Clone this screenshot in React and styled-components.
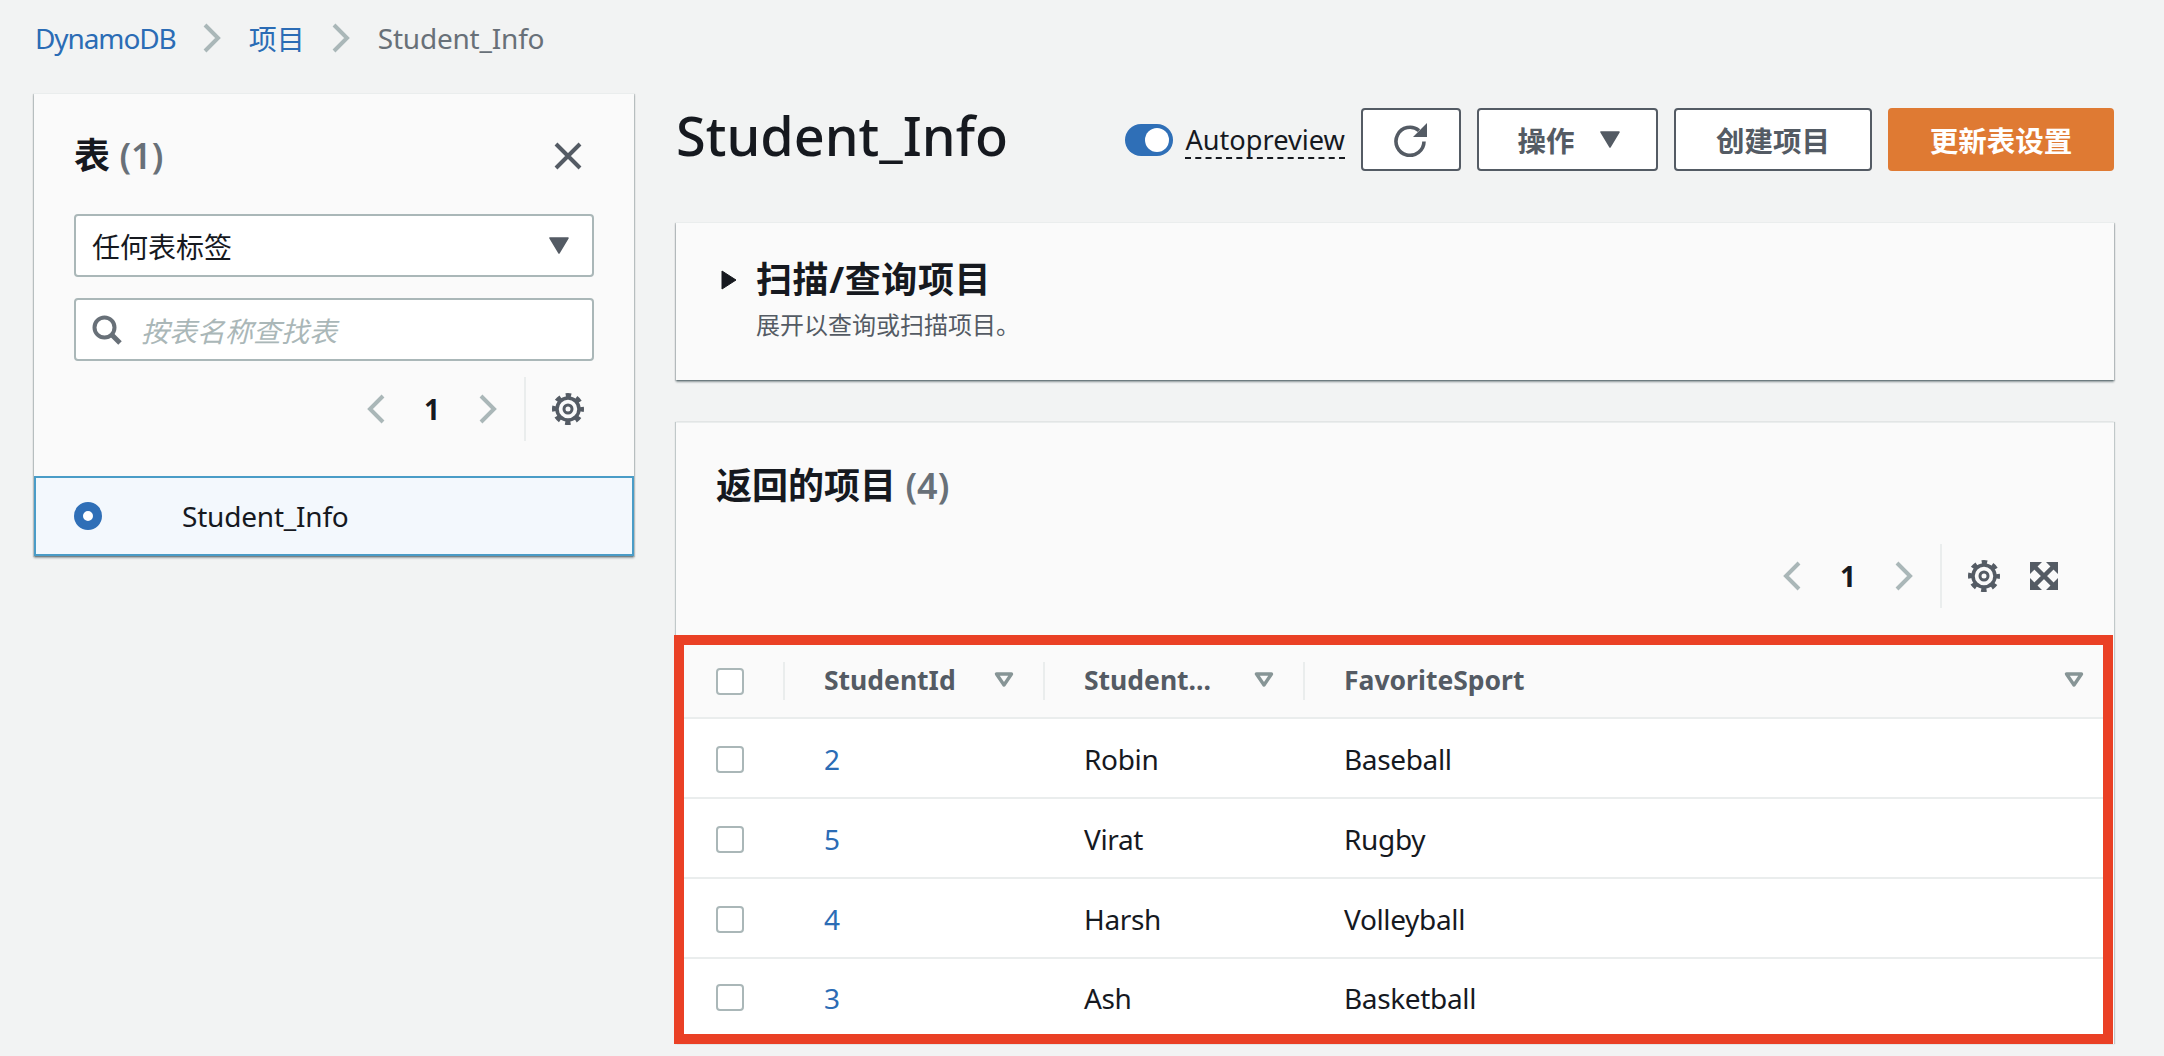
import React from 'react';
import styled, { createGlobalStyle } from 'styled-components';

const GlobalStyle = createGlobalStyle`
  html, body {
    margin: 0;
    height: 1056px;
    overflow: hidden;
    background: #f2f3f3;
    color: #16191f;
    font-family: "Noto Sans", "Noto Sans CJK SC", sans-serif;
    font-size: 28px;
  }
  * {
    box-sizing: border-box;
  }
`;

const Page = styled.div`
  padding: 0 50px 0 34px;
`;

const Breadcrumbs = styled.nav`
  display: flex;
  align-items: center;
  height: 76px;
  padding-left: 1px;
`;

const Crumb = styled.span`
  color: ${props => (props.$current ? '#687078' : '#2b6cb5')};
  letter-spacing: ${props => props.$spacing || 0}px;
`;

const CrumbSeparator = styled.span`
  display: flex;
  margin: 0 27.5px;
`;

const Columns = styled.div`
  display: flex;
  gap: 42px;
  margin-top: 17px;
`;

const Sidebar = styled.aside`
  flex: 0 0 600px;
  align-self: flex-start;
  box-shadow: 0 2px 2px rgba(0, 28, 36, 0.35), 1px 1px 1px rgba(0, 28, 36, 0.15),
    -1px 1px 1px rgba(0, 28, 36, 0.15);
`;

const SidebarBody = styled.div`
  display: flex;
  flex-direction: column;
  padding: 40px 40px 35px;
  background: #fafafa;
  border-top: 1px solid #eaeded;
`;

const SidebarTitleRow = styled.div`
  display: flex;
  align-items: center;
  justify-content: space-between;
  height: 44px;
  margin-bottom: 36px;
  padding-right: 12px;
`;

const Heading = styled.h2`
  margin: 0;
  font-size: 36px;
  font-weight: 700;
  line-height: 44px;
`;

const Count = styled.span`
  color: #687078;
  font-weight: 600;
`;

const Field = styled.div`
  display: flex;
  align-items: center;
  justify-content: ${props => (props.$between ? 'space-between' : 'flex-start')};
  height: 63px;
  margin-bottom: ${props => props.$gap || 0}px;
  padding: 0 23px 0 16px;
  background: #fff;
  border: 2px solid #aab7b8;
  border-radius: 4px;
`;

const Placeholder = styled.span`
  margin-left: 19px;
  color: #aab7b8;
  font-style: italic;
`;

const Pager = styled.div`
  display: flex;
  align-items: center;
  justify-content: flex-end;
  height: 64px;
  margin-top: ${props => props.$top || 0}px;
  padding-right: ${props => props.$right}px;
`;

const PagerChevron = styled.svg`
  width: 18px;
  height: 30px;
`;

const PageNumber = styled.span`
  width: 94px;
  font-size: 28px;
  font-weight: 700;
  text-align: center;
`;

const PagerDivider = styled.span`
  align-self: stretch;
  width: 2px;
  margin: 0 26px 0 27px;
  background: #eaeded;
`;

const IconSpacer = styled.span`
  width: 30px;
`;

const TableRadioItem = styled.div`
  display: flex;
  align-items: center;
  height: 80px;
  padding-left: 38px;
  background: #f3f8fd;
  border: 2px solid #4a9cc7;
  letter-spacing: -0.2px;
`;

const Radio = styled.span`
  flex: none;
  width: 28px;
  height: 28px;
  margin-right: 80px;
  background: #fff;
  border: 9px solid #2f6fb7;
  border-radius: 50%;
`;

const Main = styled.main`
  flex: 1;
  min-width: 0;
  padding-top: 15px;
`;

const TitleBar = styled.header`
  display: flex;
  align-items: center;
  justify-content: space-between;
  height: 63px;
  margin-bottom: 51px;
`;

const PageTitle = styled.h1`
  margin: 0;
  padding-bottom: 8px;
  font-size: 54px;
  font-weight: 500;
  line-height: 63px;
`;

const Actions = styled.div`
  display: flex;
  align-items: center;
  gap: 16px;
`;

const Toggle = styled.span`
  display: flex;
  align-items: center;
  justify-content: flex-end;
  width: 48px;
  height: 32px;
  margin-right: -4px;
  padding-right: 4px;
  background: #2f6fb7;
  border-radius: 16px;
`;

const ToggleKnob = styled.span`
  width: 24px;
  height: 24px;
  background: #fff;
  border-radius: 50%;
`;

const ToggleLabel = styled.span`
  padding-top: 2px;
  border-bottom: 2px dashed #16191f;
  font-size: 27.2px;
  line-height: 35px;
`;

const Button = styled.button`
  display: flex;
  align-items: center;
  justify-content: center;
  gap: 24px;
  width: ${props => props.$width}px;
  height: 63px;
  padding: 0 0 0 ${props => props.$shift || 0}px;
  background: ${props => (props.$primary ? '#df7a33' : '#fff')};
  border: ${props => (props.$primary ? 'none' : '2px solid #545b64')};
  border-radius: 4px;
  color: ${props => (props.$primary ? '#fff' : '#545b64')};
  font-family: inherit;
  font-size: 28.5px;
  font-weight: 700;
`;

const Card = styled.section`
  background: #fafafa;
  border-top: 1px solid #eaeded;
  box-shadow: 0 2px 2px rgba(0, 28, 36, 0.4), 1px 1px 1px rgba(0, 28, 36, 0.15),
    -1px 1px 1px rgba(0, 28, 36, 0.15);
`;

const ScanCard = styled(Card)`
  display: flex;
  height: 158px;
  margin-bottom: 42px;
  padding: 33px 0 0 45px;
`;

const ExpandArrow = styled.svg`
  flex: none;
  width: 16px;
  height: 20px;
  margin: 14px 19px 0 0;
`;

const ScanTitle = styled.h2`
  margin: 0;
  font-size: 36px;
  font-weight: 700;
  letter-spacing: 0.6px;
  line-height: 48px;
`;

const ScanHint = styled.p`
  margin: 5px 0 0;
  color: #545b64;
  font-size: 24px;
  line-height: 32px;
`;

const ResultsCard = styled(Card)`
  padding-top: 41px;
  box-shadow: 1px 0 1px rgba(0, 28, 36, 0.2), -1px 0 1px rgba(0, 28, 36, 0.2);
`;

const ResultsHeading = styled(Heading)`
  margin-left: 40px;
`;

const ResultsPager = styled.div`
  margin-bottom: 27px;
`;

const TableFrame = styled.div`
  margin: 0 1px 0 -2px;
  background: #fff;
  border: 10px solid #ea4025;
`;

const TableGrid = styled.div`
  display: grid;
  grid-template-columns: 99px 260px 260px 1fr;
  align-items: center;
  height: ${props => props.$height}px;
  padding-top: ${props => (props.$head ? 0 : 2)}px;
  background: ${props => (props.$head ? '#fafafa' : '#fff')};
  border-bottom: ${props => (props.$last ? 'none' : '2px solid #eaeded')};
`;

const CheckCell = styled.div`
  padding-left: 32px;
`;

const Checkbox = styled.span`
  display: block;
  width: 28px;
  height: 27px;
  background: #fff;
  border: 2px solid #aab7b8;
  border-radius: 4px;
`;

const HeadCell = styled.div`
  display: flex;
  align-items: center;
  justify-content: space-between;
  height: 38px;
  padding: 0 ${props => props.$right || 29}px 2px 39px;
  border-left: 2px solid #eaeded;
  color: #545b64;
  font-size: 26.5px;
  font-weight: 700;
`;

const BodyCell = styled.div`
  padding-left: 41px;
  color: ${props => (props.$link ? '#2b6cb5' : '#16191f')};
  letter-spacing: -0.35px;
`;

const rows = [
  { id: 2, name: 'Robin', sport: 'Baseball' },
  { id: 5, name: 'Virat', sport: 'Rugby' },
  { id: 4, name: 'Harsh', sport: 'Volleyball' },
  { id: 3, name: 'Ash', sport: 'Basketball' },
];

const Chevron = ({ left }) => (
  <PagerChevron viewBox="0 0 18 30" fill="none" stroke="#aab7b8" strokeWidth="4">
    <path d={left ? 'M16 2 3 15l13 13' : 'M2 2l13 13L2 28'} />
  </PagerChevron>
);

const GearIcon = () => (
  <svg width="32" height="32" viewBox="0 0 32 32" fill="none" stroke="#545b64">
    <circle cx="16" cy="16" r="11" strokeWidth="3.5" />
    <circle
      cx="16"
      cy="16"
      r="14"
      strokeWidth="4"
      strokeDasharray="5.5 5.5"
      strokeDashoffset="2.75"
    />
    <circle cx="16" cy="16" r="4" strokeWidth="3" />
  </svg>
);

const ExpandIcon = () => (
  <svg width="28" height="28" viewBox="0 0 28 28" fill="#545b64">
    <path d="M0 0h12L0 12zM28 0v12L16 0zM0 28V16l12 12zM28 28H16l12-12z" />
    <path d="M3 3l22 22M25 3 3 25" stroke="#545b64" strokeWidth="4.5" />
  </svg>
);

const RefreshIcon = () => (
  <svg width="34" height="34" viewBox="0 0 34 34" fill="none">
    <path d="M25 7.6A14 14 0 1 0 30 18.5" stroke="#545b64" strokeWidth="3.6" />
    <path d="M19 14h14V0z" fill="#545b64" />
  </svg>
);

const CloseIcon = () => (
  <svg width="28" height="28" viewBox="0 0 28 28" stroke="#545b64" strokeWidth="4">
    <path d="M2 2l24 24M26 2 2 26" />
  </svg>
);

const SearchIcon = () => (
  <svg width="30" height="30" viewBox="0 0 30 30" fill="none" stroke="#687078">
    <circle cx="12.5" cy="12.5" r="10" strokeWidth="4" />
    <path d="M19.5 19.5 28 28" strokeWidth="5" />
  </svg>
);

const Caret = ({ width = 20, height = 17, color = '#545b64' }) => (
  <svg width={width} height={height} viewBox="0 0 20 17" fill={color}>
    <path d="M1 1h18L10 16z" stroke={color} strokeWidth="1.5" strokeLinejoin="round" />
  </svg>
);

const SortIcon = () => (
  <svg width="20" height="16" viewBox="0 0 20 16" fill="none" stroke="#879596" strokeWidth="3.4">
    <path d="M2.5 2h15L10 13z" strokeLinejoin="round" />
  </svg>
);

const App = () => (
  <Page>
    <GlobalStyle />
    <Breadcrumbs>
      <Crumb $spacing={-1.1}>DynamoDB</Crumb>
      <CrumbSeparator>
        <Chevron />
      </CrumbSeparator>
      <Crumb>项目</Crumb>
      <CrumbSeparator>
        <Chevron />
      </CrumbSeparator>
      <Crumb $current $spacing={-0.2}>
        Student_Info
      </Crumb>
    </Breadcrumbs>

    <Columns>
      <Sidebar>
        <SidebarBody>
          <SidebarTitleRow>
            <Heading>
              表 <Count>(1)</Count>
            </Heading>
            <CloseIcon />
          </SidebarTitleRow>
          <Field $between $gap={21}>
            任何表标签
            <Caret />
          </Field>
          <Field>
            <SearchIcon />
            <Placeholder>按表名称查找表</Placeholder>
          </Field>
          <Pager $top={16} $right={10}>
            <Chevron left />
            <PageNumber>1</PageNumber>
            <Chevron />
            <PagerDivider />
            <GearIcon />
          </Pager>
        </SidebarBody>
        <TableRadioItem>
          <Radio />
          Student_Info
        </TableRadioItem>
      </Sidebar>

      <Main>
        <TitleBar>
          <PageTitle>Student_Info</PageTitle>
          <Actions>
            <Toggle>
              <ToggleKnob />
            </Toggle>
            <ToggleLabel>Autopreview</ToggleLabel>
            <Button $width={100}>
              <RefreshIcon />
            </Button>
            <Button $width={181} $shift={3}>
              操作
              <Caret width={22} height={17} />
            </Button>
            <Button $width={198}>创建项目</Button>
            <Button $width={226} $primary>
              更新表设置
            </Button>
          </Actions>
        </TitleBar>

        <ScanCard>
          <ExpandArrow viewBox="0 0 16 20" fill="#16191f">
            <path d="M1 1l14 9L1 19z" stroke="#16191f" strokeLinejoin="round" />
          </ExpandArrow>
          <div>
            <ScanTitle>扫描/查询项目</ScanTitle>
            <ScanHint>展开以查询或扫描项目。</ScanHint>
          </div>
        </ScanCard>

        <ResultsCard>
          <ResultsHeading>
            返回的项目 <Count>(4)</Count>
          </ResultsHeading>
          <ResultsPager>
            <Pager $top={36} $right={56}>
              <Chevron left />
              <PageNumber>1</PageNumber>
              <Chevron />
              <PagerDivider />
              <GearIcon />
              <IconSpacer />
              <ExpandIcon />
            </Pager>
          </ResultsPager>

          <TableFrame>
            <TableGrid $head $height={74}>
              <CheckCell>
                <Checkbox />
              </CheckCell>
              <HeadCell>
                StudentId
                <SortIcon />
              </HeadCell>
              <HeadCell>
                Student...
                <SortIcon />
              </HeadCell>
              <HeadCell $right={19}>
                FavoriteSport
                <SortIcon />
              </HeadCell>
            </TableGrid>
            {rows.map((row, index) => (
              <TableGrid
                key={row.id}
                $height={index === rows.length - 1 ? 75 : 80}
                $last={index === rows.length - 1}
              >
                <CheckCell>
                  <Checkbox />
                </CheckCell>
                <BodyCell $link>{row.id}</BodyCell>
                <BodyCell>{row.name}</BodyCell>
                <BodyCell>{row.sport}</BodyCell>
              </TableGrid>
            ))}
          </TableFrame>
        </ResultsCard>
      </Main>
    </Columns>
  </Page>
);

export default App;
